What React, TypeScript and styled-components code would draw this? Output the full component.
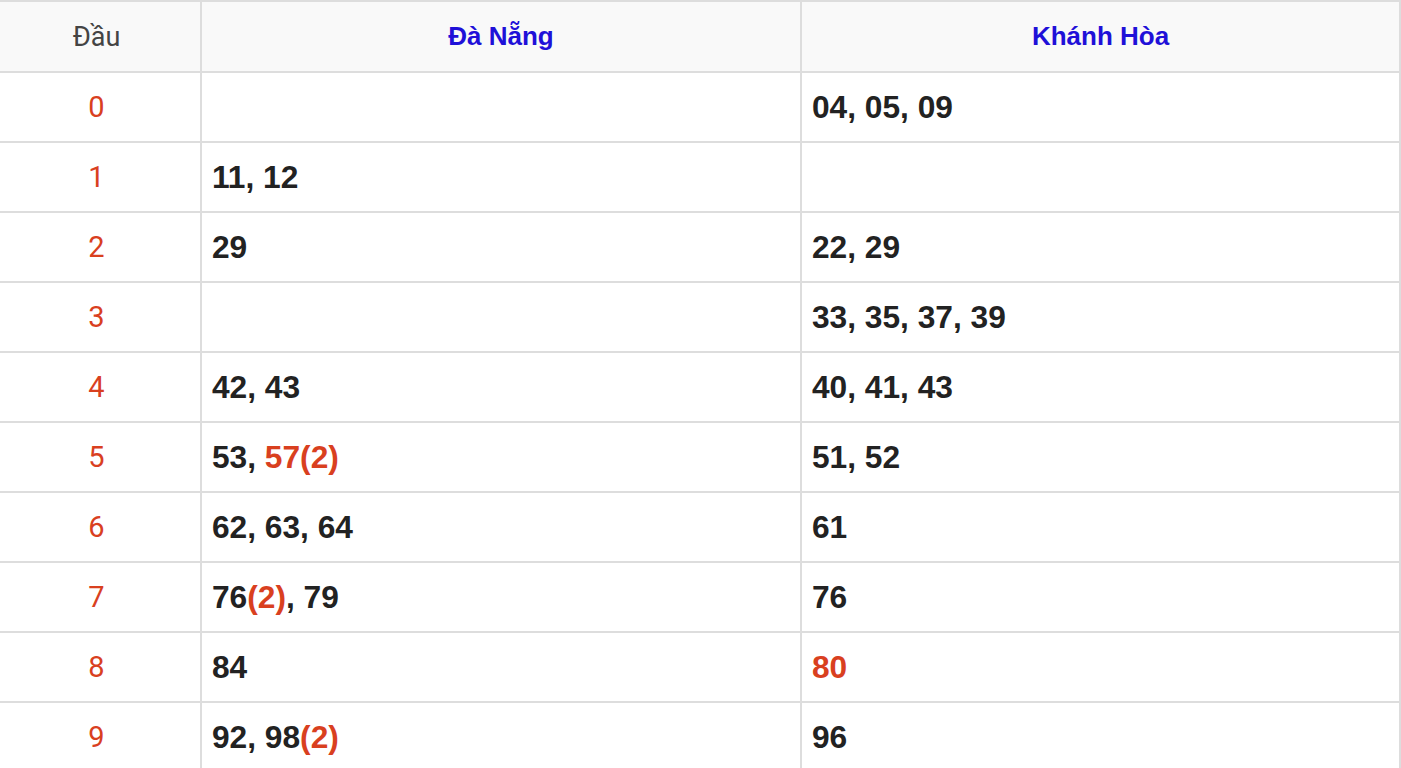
import React from "react";
import styled, { createGlobalStyle } from "styled-components";

const Global = createGlobalStyle`
  html, body { margin: 0; padding: 0; background: #ffffff; }
  body { overflow: hidden; }
`;

const Table = styled.div`
  display: grid;
  grid-template-columns: 200px 598px 597px;
  grid-auto-rows: 68px;
  grid-template-rows: 69px;
  gap: 2px;
  padding: 2px 2px 0 0;
  width: 1399px;
  background: #dddddd;
`;

const HeadCell = styled.div<{ $accent?: boolean; $first?: boolean }>`
  display: flex;
  align-items: center;
  justify-content: center;
  padding-right: ${(p) => (p.$first ? "7px" : "0")};
  background: #f9f9f9;
  font-family: ${(p) => (p.$accent ? '"Liberation Sans", Arial, sans-serif' : 'Roboto, "Noto Sans", sans-serif')};
  font-weight: ${(p) => (p.$accent ? 700 : 400)};
  font-size: ${(p) => (p.$accent ? "26px" : "27px")};
  color: ${(p) => (p.$accent ? "#1f10d8" : "#444444")};
`;

const DigitCell = styled.div`
  display: flex;
  align-items: center;
  justify-content: center;
  padding-right: 7px;
  background: #ffffff;
  font-family: Roboto, "Noto Sans", sans-serif;
  font-size: 29px;
  color: #d9401f;
`;

const NumCell = styled.div`
  display: flex;
  align-items: center;
  padding-left: 10px;
  background: #ffffff;
  font-family: "Liberation Sans", Arial, sans-serif;
  font-weight: 700;
  font-size: 31.7px;
  color: #222222;
  white-space: pre;
`;

const Hot = styled.span`
  color: #d9401f;
`;

type Part = string | { hot: string };

const rows: { d: string; dn: Part[]; kh: Part[] }[] = [
  { d: "0", dn: [], kh: ["04, 05, 09"] },
  { d: "1", dn: ["11, 12"], kh: [] },
  { d: "2", dn: ["29"], kh: ["22, 29"] },
  { d: "3", dn: [], kh: ["33, 35, 37, 39"] },
  { d: "4", dn: ["42, 43"], kh: ["40, 41, 43"] },
  { d: "5", dn: ["53, ", { hot: "57(2)" }], kh: ["51, 52"] },
  { d: "6", dn: ["62, 63, 64"], kh: ["61"] },
  { d: "7", dn: ["76", { hot: "(2)" }, ", 79"], kh: ["76"] },
  { d: "8", dn: ["84"], kh: [{ hot: "80" }] },
  { d: "9", dn: ["92, 98", { hot: "(2)" }], kh: ["96"] },
];

const renderParts = (parts: Part[]) =>
  parts.map((p, i) =>
    typeof p === "string" ? <React.Fragment key={i}>{p}</React.Fragment> : <Hot key={i}>{p.hot}</Hot>
  );

export default function App() {
  return (
    <>
      <Global />
      <Table>
        <HeadCell $first>Đầu</HeadCell>
        <HeadCell $accent>Đà Nẵng</HeadCell>
        <HeadCell $accent>Khánh Hòa</HeadCell>
        {rows.map((r) => (
          <React.Fragment key={r.d}>
            <DigitCell>{r.d}</DigitCell>
            <NumCell>{renderParts(r.dn)}</NumCell>
            <NumCell>{renderParts(r.kh)}</NumCell>
          </React.Fragment>
        ))}
      </Table>
    </>
  );
}
